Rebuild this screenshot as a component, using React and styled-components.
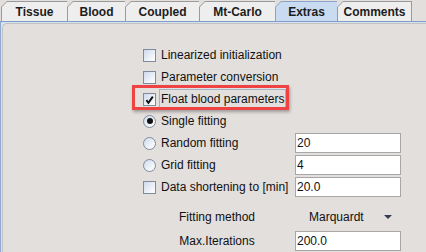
import React from "react";
import styled, { createGlobalStyle } from "styled-components";

const tabs = [
  { label: "Tissue", width: 66 },
  { label: "Blood", width: 58 },
  { label: "Coupled", width: 74 },
  { label: "Mt-Carlo", width: 76 },
  { label: "Extras", width: 62, selected: true },
  { label: "Comments", width: 75, last: true },
];

export default function App() {
  return (
    <Page>
      <GlobalStyle />
      <TabBar>
        {tabs.map(tab => (
          <Tab
            key={tab.label}
            $width={tab.width}
            $selected={tab.selected}
            $last={tab.last}
          >
            <TabFace $selected={tab.selected}>{tab.label}</TabFace>
          </Tab>
        ))}
      </TabBar>
      <Frame>
        <Panel>
          <Options>
            <Row>
              <Cell>
                <Option>
                  <CheckBox />
                  <Label>Linearized initialization</Label>
                </Option>
              </Cell>
            </Row>
            <Row>
              <Cell>
                <Option>
                  <CheckBox />
                  <Label>Parameter conversion</Label>
                </Option>
              </Cell>
            </Row>
            <Row>
              <Cell>
                <Option $highlight>
                  <CheckBox>
                    <svg width="11" height="11" viewBox="0 0 11 11">
                      <path
                        d="M2.4 6.2 L4.4 8.8 L8.8 2.6"
                        fill="none"
                        stroke="#111"
                        strokeWidth="1.9"
                      />
                    </svg>
                  </CheckBox>
                  <Label $focused>Float blood parameters</Label>
                </Option>
              </Cell>
            </Row>
            <Row>
              <Cell>
                <Option>
                  <Radio $checked />
                  <Label>Single fitting</Label>
                </Option>
              </Cell>
            </Row>
            <Row>
              <Cell>
                <Option>
                  <Radio />
                  <Label>Random fitting</Label>
                </Option>
              </Cell>
              <Field>20</Field>
            </Row>
            <Row>
              <Cell>
                <Option>
                  <Radio />
                  <Label>Grid fitting</Label>
                </Option>
              </Cell>
              <Field>4</Field>
            </Row>
            <Row>
              <Cell>
                <Option>
                  <CheckBox />
                  <Label>Data shortening to [min]</Label>
                </Option>
              </Cell>
              <Field>20.0</Field>
            </Row>
          </Options>
          <Settings>
            <SettingRow>
              <SettingLabel>Fitting method</SettingLabel>
              <Combo>
                <span>Marquardt</span>
                <Arrow />
              </Combo>
            </SettingRow>
            <SettingRow>
              <SettingLabel>Max.Iterations</SettingLabel>
              <Field>200.0</Field>
            </SettingRow>
          </Settings>
        </Panel>
      </Frame>
    </Page>
  );
}

const GlobalStyle = createGlobalStyle`
  body {
    margin: 0;
    background: #e2dfdd;
    font-family: "Liberation Sans", Arial, sans-serif;
  }
`;

const Page = styled.div`
  width: 426px;
  height: 252px;
  overflow: hidden;
  display: flex;
  flex-direction: column;
`;

const TabBar = styled.div`
  display: flex;
  height: 20px;
  padding: 1px 0 0 1px;
`;

const Tab = styled.div`
  width: ${props => props.$width}px;
  height: 20px;
  display: flex;
  background: ${props => (props.$selected ? "#8aa3c8" : "#9a9a9a")};
  clip-path: polygon(6px 0, 100% 0, 100% 100%, 0 100%, 0 6px);
  padding: 1px ${props => (props.$last ? "1px" : "0")} 0 1px;
  box-sizing: border-box;
`;

const TabFace = styled.div`
  flex: 1;
  display: flex;
  align-items: center;
  justify-content: center;
  background: ${props => (props.$selected ? "#c8dbf0" : "#eeeeee")};
  clip-path: polygon(5px 0, 100% 0, 100% 100%, 0 100%, 0 5px);
  font-size: 12px;
  font-weight: bold;
  color: #1c1c1c;
  padding-top: 1px;
`;

const Frame = styled.div`
  flex: 1;
  display: flex;
  border-top: 1px solid #7f9dca;
  border-left: 1px solid #8ea8cf;
  background: #d9e3ef;
`;

const Panel = styled.div`
  flex: 1;
  margin: 1px 0 0 1px;
  border-top: 1px solid #c2c2c2;
  border-left: 1px solid #c2c2c2;
  border-top-left-radius: 5px;
  background: #e2dfdd;
  padding: 20px 0 0 140px;
`;

const Options = styled.div`
  display: flex;
  flex-direction: column;
`;

const Row = styled.div`
  display: flex;
  align-items: center;
  height: 22px;
`;

const Cell = styled.div`
  width: 152px;
  height: 100%;
  display: flex;
  align-items: center;
`;

const Option = styled.div`
  position: relative;
  display: inline-flex;
  align-items: center;
  height: 100%;

  ${props =>
    props.$highlight &&
    `
    &::after {
      content: "";
      position: absolute;
      left: -11px;
      right: -3px;
      top: -3px;
      bottom: 0;
      border: 3px solid #ef4343;
      box-shadow: 1px 2px 3px rgba(0, 0, 0, 0.3);
      pointer-events: none;
    }
  `}
`;

const CheckBox = styled.span`
  width: 13px;
  height: 13px;
  box-sizing: border-box;
  display: flex;
  align-items: center;
  justify-content: center;
  border: 1px solid #7d8b9b;
  background: linear-gradient(135deg, #cfdaec 0%, #f2f5fa 70%, #ffffff 100%);
`;

const Radio = styled.span`
  width: 13px;
  height: 13px;
  box-sizing: border-box;
  border-radius: 50%;
  border: 1px solid #7f8c9c;
  background: linear-gradient(135deg, #d0dbec 0%, #f4f6fa 70%, #ffffff 100%);
  display: flex;
  align-items: center;
  justify-content: center;

  &::after {
    content: "";
    display: ${props => (props.$checked ? "block" : "none")};
    width: 6px;
    height: 6px;
    border-radius: 50%;
    background: #111;
  }
`;

const Label = styled.span`
  margin-left: 3px;
  padding: 2px 1px;
  border: 1px solid ${props => (props.$focused ? "#a2b3c8" : "transparent")};
  font-size: 12px;
  color: #111;
  white-space: nowrap;
`;

const Field = styled.div`
  width: 106px;
  height: 20px;
  box-sizing: border-box;
  border: 1px solid #a7a7a7;
  background: #ffffff;
  padding-left: 1px;
  display: flex;
  align-items: center;
  font-size: 12px;
  color: #111;
`;

const Settings = styled.div`
  display: flex;
  flex-direction: column;
  margin-top: 7px;
`;

const SettingRow = styled.div`
  display: flex;
  align-items: center;
  height: 24px;
`;

const SettingLabel = styled.div`
  width: 152px;
  padding-right: 4px;
  box-sizing: border-box;
  text-align: center;
  font-size: 12px;
  color: #111;
`;

const Combo = styled.div`
  width: 106px;
  display: flex;
  align-items: center;
  justify-content: space-between;
  padding: 0 9px 0 14px;
  box-sizing: border-box;
  font-size: 12px;
  color: #111;
`;

const Arrow = styled.span`
  width: 0;
  height: 0;
  border-left: 4px solid transparent;
  border-right: 4px solid transparent;
  border-top: 4px solid #333a55;
`;
